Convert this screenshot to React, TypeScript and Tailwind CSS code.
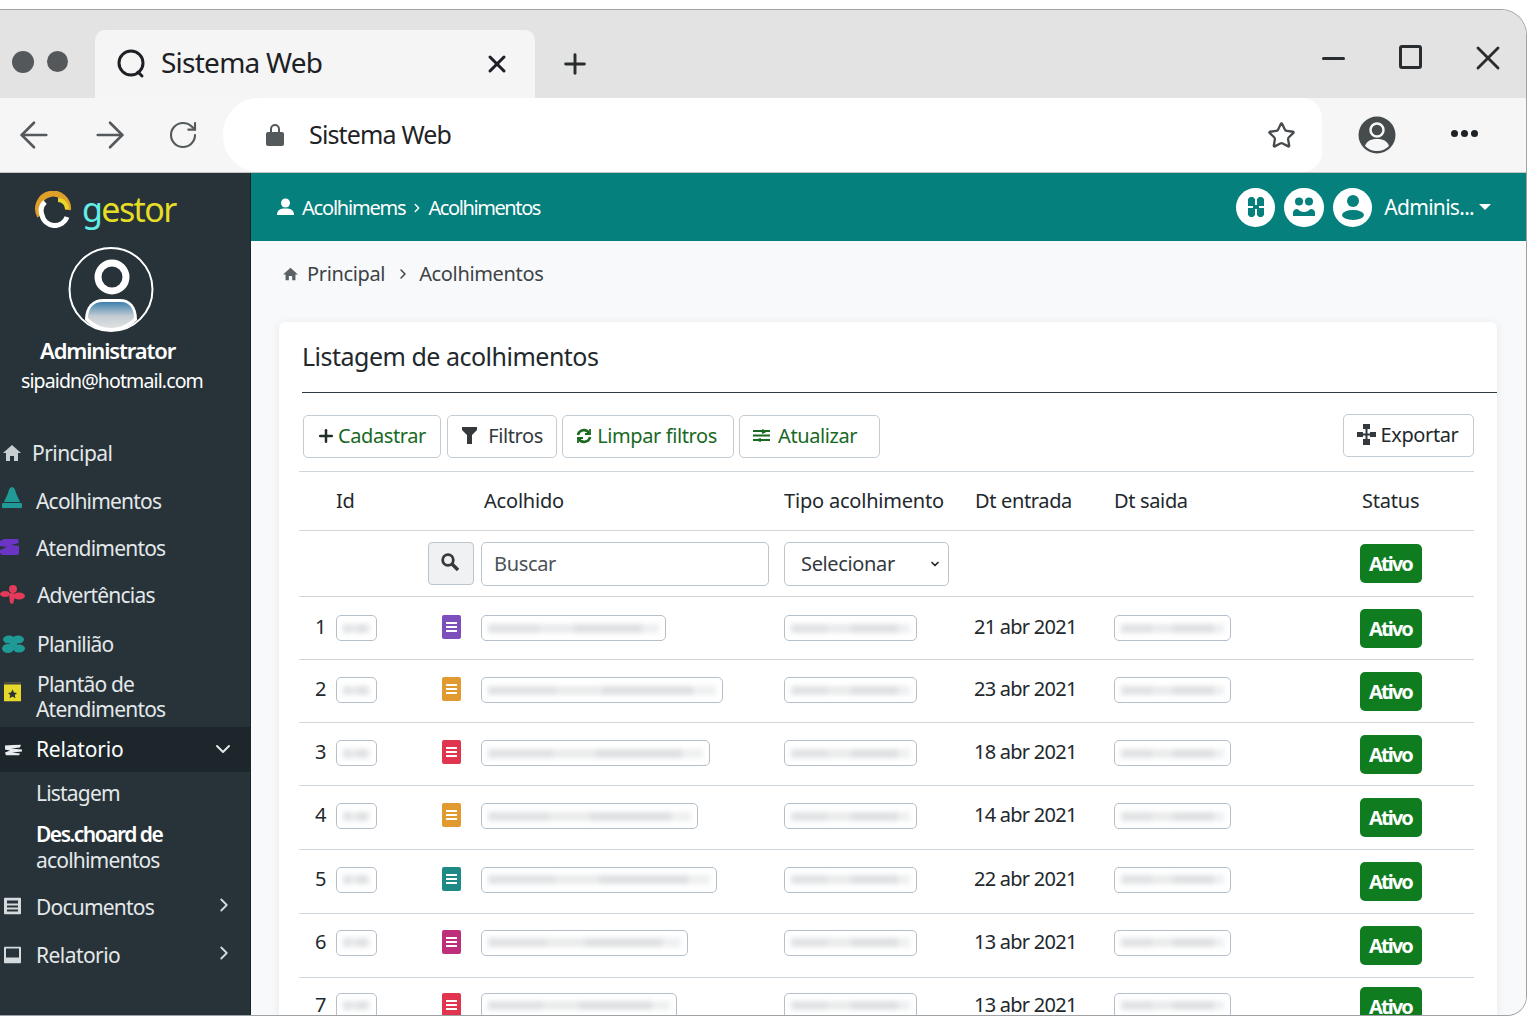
import React from "react";
import { ArrowLeft, ArrowRight, RotateCw, X, Plus, Star, ChevronDown, ChevronRight } from "lucide-react";

const grid = "grid grid-cols-[129px_53px_303px_191px_139px_246px_114px] border-b border-[#cfd6dc]";

function Blur({ width }: { width: string }) {
  return (
    <div className={`${width} h-[26px] rounded-[5px] border border-[#b4bfca] bg-white flex items-center px-[6px] overflow-hidden`}>
      <div className="flex-1 flex h-[9px] blur-[2.5px]">
        <div className="flex-[3] bg-[#e0e2e4]" />
        <div className="flex-[2] bg-[#eaebec]" />
        <div className="flex-[4] bg-[#dee0e2]" />
        <div className="flex-[1] bg-[#eeeff0]" />
      </div>
    </div>
  );
}

function DocIcon({ color }: { color: string }) {
  return (
    <div className={`${color} w-[19px] h-[24px] rounded-[2px] flex flex-col items-center justify-center gap-[2px]`}>
      <div className="w-[11px] h-[2px] bg-white" />
      <div className="w-[11px] h-[2px] bg-white" />
      <div className="w-[11px] h-[2px] bg-white" />
    </div>
  );
}

function Badge() {
  return (
    <div className="w-[62px] h-[39px] rounded-[5px] bg-[#0f7d1f] flex items-center justify-center text-white font-bold text-[20px] tracking-[-1.9px]">
      <span className="-ml-[1px] mt-[1px]">Ativo</span>
    </div>
  );
}

const rows = [
  { n: "1", h: "h-[63px]", o: "mb-0", b: "mb-0", c: "bg-[#7d4fbd]", w: "w-[185px]", d: "21 abr 2021" },
  { n: "2", h: "h-[63px]", o: "mb-[2px]", b: "mb-0", c: "bg-[#e09a30]", w: "w-[242px]", d: "23 abr 2021" },
  { n: "3", h: "h-[63px]", o: "mb-[2px]", b: "mb-0", c: "bg-[#e0344f]", w: "w-[229px]", d: "18 abr 2021" },
  { n: "4", h: "h-[64px]", o: "mb-[3px]", b: "mb-0", c: "bg-[#e09a30]", w: "w-[217px]", d: "14 abr 2021" },
  { n: "5", h: "h-[64px]", o: "mb-[4px]", b: "mb-0", c: "bg-[#1f8a85]", w: "w-[236px]", d: "22 abr 2021" },
  { n: "6", h: "h-[64px]", o: "mb-[6px]", b: "mb-0", c: "bg-[#bd2f78]", w: "w-[207px]", d: "13 abr 2021" },
  { n: "7", h: "h-[64px]", o: "mb-[8px]", b: "mb-[6px]", c: "bg-[#e0344f]", w: "w-[196px]", d: "13 abr 2021" },
];

const txt = "text-[20px] tracking-[-0.75px] whitespace-nowrap";

function NavItem({ h, pl, icon, children, right, cls }: { h: string; pl: string; icon?: React.ReactNode; children: React.ReactNode; right?: React.ReactNode; cls?: string }) {
  return (
    <div className={`${h} ${cls ?? ""} relative flex items-center ${pl} pr-[20px] text-[21px] leading-[26px] tracking-[-0.8px] text-[#e4e8ea]`}>
      {icon && <span className="absolute left-[2px] top-1/2 -translate-y-1/2 flex">{icon}</span>}
      <span className="flex-1">{children}</span>
      {right}
    </div>
  );
}

export default function App() {
  return (
    <div className="w-[1536px] h-[1024px] bg-white pt-[9px] overflow-hidden font-['Noto_Sans','Liberation_Sans',sans-serif]">
      <div className="w-[1527px] h-[1007px] border-t border-r border-b border-[#a0a3a5] rounded-tr-[26px] rounded-br-[20px] overflow-hidden flex flex-col">
        {/* Tab strip */}
        <div className="h-[88px] bg-[#e3e3e3] flex items-end shrink-0">
          <div className="w-[95px] h-[88px] pl-[12px] pt-[41px] flex gap-[13px]">
            <div className="w-[22px] h-[22px] rounded-full bg-[#54585a]" />
            <div className="w-[21px] h-[21px] rounded-full bg-[#54585a]" />
          </div>
          <div className="w-[440px] h-[68px] rounded-t-[10px] bg-[#f5f5f5] flex items-center pl-[21px] pr-[25px]">
            <svg width="32" height="32" viewBox="0 0 32 32" fill="none" stroke="#1d2125" strokeWidth="3" strokeLinecap="round"><circle cx="15" cy="15" r="12" /><path d="M22 24l4 4" /></svg>
            <span className="ml-[13px] mb-[4px] flex-1 text-[28px] tracking-[-0.75px] text-[#1d2125]">Sistema Web</span>
            <X size={28} strokeWidth={2.6} className="text-[#1d2125] ml-[1px] -mr-[1px]" />
          </div>
          <div className="w-[80px] h-[68px] flex items-center justify-center">
            <Plus size={32} strokeWidth={2.2} className="text-[#2a2d30]" />
          </div>
          <div className="flex-1 h-[88px] flex items-center justify-end pr-[18px] pt-[8px]">
            <div className="w-[23px] h-[3px] rounded bg-[#2a2d30]" />
            <div className="ml-[54px] w-[23px] h-[24px] rounded-[3px] border-[3px] border-[#2a2d30] -mt-[2px]" />
            <X size={40} strokeWidth={1.7} className="text-[#2a2d30] ml-[46px]" />
          </div>
        </div>
        {/* Toolbar */}
        <div className="h-[75px] bg-[#f6f6f6] flex items-start shrink-0 border-b border-[#c5c5c5]">
          <div className="w-[223px] h-[74px] pl-[13px] flex items-center gap-[34px] text-[#54595c]">
            <ArrowLeft size={42} strokeWidth={1.5} />
            <ArrowRight size={42} strokeWidth={1.5} />
            <RotateCw size={32} strokeWidth={1.6} className="ml-[2px]" />
          </div>
          <div className="w-[1099px] h-[74px] rounded-l-[36px] rounded-r-[20px] bg-white flex items-center pl-[42px] pr-[26px]">
            <svg width="20" height="26" viewBox="0 0 20 26" fill="#54595c"><path d="M5 11V7a5 5 0 0 1 10 0v4h-2V7a3 3 0 0 0-6 0v4z" /><rect x="1" y="10" width="18" height="14" rx="2" /></svg>
            <span className="ml-[24px] flex-1 text-[25px] tracking-[-0.85px] text-[#1f2326]">Sistema Web</span>
            <Star size={29} strokeWidth={1.9} className="text-[#464b4e]" />
          </div>
          <div className="flex-1 h-[74px] flex items-center pl-[36px]">
            <svg width="38" height="38" viewBox="0 0 38 38"><circle cx="19" cy="19" r="18.5" fill="#464b4e" /><circle cx="19" cy="14" r="6.5" fill="none" stroke="#f6f6f6" strokeWidth="2.5" /><path d="M7 30c2-6 7-7 12-7s10 1 12 7c-3 3-7 5-12 5s-9-2-12-5z" fill="#f6f6f6" /></svg>
            <div className="ml-[55px] flex gap-[3px] -mt-[3px]">
              <div className="w-[7px] h-[7px] rounded-full bg-[#1f2326]" />
              <div className="w-[7px] h-[7px] rounded-full bg-[#1f2326]" />
              <div className="w-[7px] h-[7px] rounded-full bg-[#1f2326]" />
            </div>
          </div>
        </div>
        {/* Body */}
        <div className="flex-1 flex min-h-0">
          {/* Sidebar */}
          <aside className="w-[251px] shrink-0 bg-[#273339] border-r border-[#1c2529] flex flex-col">
            <div className="h-[256px] flex flex-col shrink-0">
              <div className="h-[73px] pl-[34px] flex items-center gap-[9px]">
                <svg width="39" height="37" viewBox="0 0 39 37" fill="none">
                  <path d="M6 25A15 15 0 1 1 34 19" stroke="#dfa02a" strokeWidth="6" />
                  <path d="M33 26A13 13 0 0 1 8 24 12 12 0 0 1 11 11" stroke="#ffffff" strokeWidth="5" />
                  <path d="M24 9a9 9 0 0 1 9 9" stroke="#e8d62a" strokeWidth="4" />
                </svg>
                <span className="mb-[2px] text-[34px] leading-[40px] tracking-[-1.6px] text-[#e6de26]"><span className="text-[#62eee8]">g</span>estor</span>
              </div>
              <div className="pl-[68px]">
                <svg width="86" height="87" viewBox="0 0 86 87" fill="none">
                  <defs><linearGradient id="bd" x1="0" y1="0" x2="0" y2="1"><stop offset="0" stopColor="#3d7fae" /><stop offset="0.55" stopColor="#c5cdd2" /><stop offset="1" stopColor="#dfe1e2" /></linearGradient></defs>
                  <circle cx="43" cy="43.5" r="41.5" stroke="#fff" strokeWidth="2" />
                  <circle cx="44" cy="31" r="14" stroke="#fff" strokeWidth="7" />
                  <path d="M17 74c0-14 8-21 18-21h17c10 0 17 7 17 21-7 7-16 11-26 11s-19-4-26-11z" fill="#fff" />
                  <path d="M20 72c0-10 6-16 14-16h19c8 0 13 6 13 16-6 6-14 10-23 10s-17-4-23-10z" fill="url(#bd)" />
                </svg>
              </div>
              <div className="pl-[40px] pt-[2px] text-[22px] leading-[30px] font-semibold tracking-[-1.15px] text-white">Administrator</div>
              <div className="pl-[21px] pt-[1px] text-[19.5px] leading-[29px] tracking-[-0.88px] text-white">sipaidn@hotmail.com</div>
            </div>
            <NavItem h="h-[48px]" pl="pl-[32px]" icon={<svg width="18" height="18" viewBox="0 0 18 18" fill="#c8cfd2" className="ml-[1px]"><path d="M9 1L0 9h3v8h4v-5h4v5h4V9h3z" /></svg>}><span className="tracking-[-0.55px]">Principal</span></NavItem>
            <NavItem h="h-[48px]" pl="pl-[36px]" icon={<svg width="20" height="22" viewBox="0 0 20 22" fill="#1f9a96" className="-mt-[6px]"><path d="M10 0c2 0 3 2 4 6 1 3 3 6 4 9H2c1-3 3-6 4-9 1-4 2-6 4-6z" /><rect x="0" y="16" width="20" height="5" rx="1" /></svg>}>Acolhimentos</NavItem>
            <NavItem h="h-[46px]" pl="pl-[36px]" icon={<svg width="20" height="17" viewBox="0 0 20 17" fill="#6a35c4" className="-ml-[2px] -mt-[1px]"><path d="M0 2l4-2h14l1 4-8 2 8 1 0 8-2 1H2l-2-2v-3l7-3-7-1z" /></svg>}>Atendimentos</NavItem>
            <NavItem h="h-[47px]" pl="pl-[37px]" icon={<svg width="25" height="20" viewBox="0 0 25 20" fill="#e23a58" className="-ml-[2px]"><circle cx="13" cy="4" r="4" /><ellipse cx="19" cy="11" rx="6" ry="3.5" /><ellipse cx="5" cy="9" rx="5" ry="3" /><path d="M9 9l4-2 2 4-2 8-3-1z" /></svg>}>Advertências</NavItem>
            <NavItem h="h-[51px]" pl="pl-[37px]" icon={<svg width="23" height="19" viewBox="0 0 23 19" fill="#1f9a96"><ellipse cx="7" cy="5" rx="6" ry="4" /><ellipse cx="16" cy="5" rx="6" ry="4" /><ellipse cx="6" cy="14" rx="6" ry="4.500" /><ellipse cx="17" cy="14" rx="6" ry="4" /><rect x="8" y="6" width="7" height="7" /></svg>}>Planilião</NavItem>
            <NavItem h="h-[58px]" pl="pl-[37px]" cls="pb-[3px] !leading-[25px]" icon={<svg width="17" height="19" viewBox="0 0 17 19" className="ml-[2px] -mt-[12px]"><rect width="17" height="19" fill="#e6d92a" /><rect y="0" width="17" height="2" fill="#444" /><path d="M8.5 7l1.500 3 3 .5-2.200 2 .6 3.200-2.900-1.600-2.900 1.600.6-3.200-2.200-2 3-.5z" fill="#283238" /></svg>}>Plantão de<br /><span className="-ml-px">Atendimentos</span></NavItem>
            <NavItem h="h-[45px]" pl="pl-[36px]" cls="bg-[#1c262b] !text-white pb-[2px]" icon={<svg width="17" height="11" viewBox="0 0 17 11" fill="#e8ecee" className="ml-[3px]"><path d="M0 1l16-1-1 3-9 1 11 1v2L7 8l8 1-1 2H1l-1-3 5-2-5-1z" /></svg>} right={<ChevronDown size={24} strokeWidth={2} className="text-[#e4e8ea] -mr-[5px]" />}><span className="tracking-[-0.2px]">Relatorio</span></NavItem>
            <NavItem h="h-[42px]" pl="pl-[36px]">Listagem</NavItem>
            <NavItem h="h-[66px]" pl="pl-[36px]"><span className="font-semibold text-white tracking-[-1.5px]">Des.choard de</span><br />acolhimentos</NavItem>
            <NavItem h="h-[51px]" pl="pl-[36px]" cls="pt-[2px]" icon={<svg width="17" height="17" viewBox="0 0 17 17" className="ml-[2px]"><rect width="17" height="17" rx="1" fill="#d5dadc" /><rect x="3" y="3" width="11" height="3" fill="#273339" /><rect x="3" y="8" width="11" height="2" fill="#273339" /><rect x="3" y="12" width="11" height="2" fill="#273339" /></svg>} right={<ChevronRight size={22} strokeWidth={2} className="text-[#d5dadc] -mr-[5px] -mt-[4px]" />}>Documentos</NavItem>
            <NavItem h="h-[48px]" pl="pl-[36px]" icon={<svg width="17" height="17" viewBox="0 0 17 17" className="ml-[2px]"><rect width="17" height="17" rx="1" fill="#d5dadc" /><rect x="2" y="2" width="13" height="9" fill="#273339" /></svg>} right={<ChevronRight size={22} strokeWidth={2} className="text-[#d5dadc] -mr-[5px] -mt-[4px]" />}><span className="tracking-[-0.55px]">Relatorio</span></NavItem>
          </aside>
          {/* Main */}
          <main className="flex-1 min-w-0 bg-[#f8f9fa] flex flex-col">
            <div className="h-[68px] shrink-0 bg-[#05807c] flex items-center pl-[26px] pr-[35px] text-white">
              <svg width="17" height="18" viewBox="0 0 17 18" fill="#fff"><circle cx="8.500" cy="5" r="4.500" /><path d="M0 17c0-5 3-6.500 8.500-6.500S17 12 17 17z" /></svg>
              <span className="ml-[8px] mt-[2px] text-[20px] tracking-[-1.2px]">Acolhimems</span>
              <ChevronRight size={14} strokeWidth={2.4} className="ml-[5px] mt-[2px]" />
              <span className="ml-[4px] mt-[2px] flex-1 text-[20px] tracking-[-1.4px]">Acolhimentos</span>
              <div className="flex gap-[9px]">
                <div className="w-[39px] h-[39px] rounded-full bg-white flex items-center justify-center">
                  <svg width="18" height="20" viewBox="0 0 18 20" fill="#05807c"><path d="M1 2l2-2h3l2 2v7H1zM10 2l2-2h3l2 2v7h-7zM1 11h7v7l-2 2H3l-2-2zM10 11h7v7l-2 2h-3l-2-2z" /><rect x="6" y="8" width="6" height="4" /></svg>
                </div>
                <div className="w-[40px] h-[39px] rounded-full bg-white flex items-center justify-center">
                  <svg width="24" height="20" viewBox="0 0 24 20" fill="#05807c"><circle cx="7" cy="4.500" r="4" /><circle cx="17" cy="4.500" r="4" /><path d="M1 19v-3c0-3 2-4 4-4 2 0 2 3 7 3s5-3 7-3c2 0 4 1 4 4v3z" /></svg>
                </div>
                <div className="w-[39px] h-[39px] rounded-full bg-white flex items-center justify-center">
                  <svg width="22" height="26" viewBox="0 0 22 26" fill="#05807c"><circle cx="11" cy="7" r="6" /><ellipse cx="11" cy="21" rx="11" ry="5" /></svg>
                </div>
              </div>
              <span className="ml-[12px] mt-[1px] text-[21px] tracking-[-0.7px]">Adminis...</span>
              <span className="ml-[5px] w-0 h-0 border-x-[6px] border-x-transparent border-t-[6px] border-t-white" />
            </div>
            <div className="h-[81px] shrink-0 flex items-center pl-[32px] pb-[15px] text-[#3d4347] text-[20px] tracking-[-0.35px]">
              <svg width="15" height="14" viewBox="0 0 18 17" fill="#5a6165"><path d="M9 1L0 9h3v7h4v-5h4v5h4V9h3z" /></svg>
              <span className="ml-[9px]">Principal</span>
              <ChevronRight size={16} strokeWidth={2.2} className="ml-[10px]" />
              <span className="ml-[8px]">Acolhimentos</span>
            </div>
            <section className="ml-[28px] w-[1218px] flex-1 min-h-0 rounded-t-[6px] bg-white shadow-[0_1px_8px_rgba(0,0,0,0.08)] pl-[20px] pr-[23px] overflow-hidden">
              <div className="h-[71px] -mr-[23px] ml-[3px] border-b border-[#2e3a3f] flex items-center text-[25px] tracking-[-0.5px] text-[#22282c]">Listagem de acolhimentos</div>
              <div className="h-[79px] border-b border-[#cfd6dc] flex items-start pt-[22px] pl-[4px] gap-[5px] text-[20px] leading-[26px] tracking-[-0.4px]">
                <button className="w-[138px] h-[43px] pb-[2px] rounded-[5px] border border-[#c3ccd3] flex items-center justify-center gap-[2px] pr-[2px] text-[#18691f] mr-[1px]"><Plus size={20} strokeWidth={3} className="text-[#1f2f25]" />Cadastrar</button>
                <button className="w-[110px] h-[43px] pb-[2px] rounded-[5px] border border-[#c3ccd3] flex items-center justify-center gap-[10px] text-[#33393d]">
                  <svg width="17" height="17" viewBox="0 0 17 17" fill="#33393d"><path d="M1 0h15v3l-5 5v9H6V8L1 3z" /></svg>Filtros</button>
                <button className="w-[172px] h-[43px] pb-[2px] rounded-[5px] border border-[#c3ccd3] flex items-center justify-center gap-[5px] pr-[3px] text-[#18691f]">
                  <svg width="16" height="16" viewBox="0 0 16 16" fill="none" stroke="#18691f" strokeWidth="2.600"><path d="M2 7a6 6 0 0 1 11-2M14 9a6 6 0 0 1-11 2" /><path d="M14 1v5H9M2 15v-5h5" strokeWidth="1.800" /></svg>Limpar filtros</button>
                <button className="w-[141px] h-[43px] pb-[2px] rounded-[5px] border border-[#c3ccd3] flex items-center pl-[13px] gap-[8px] text-[#18691f]">
                  <svg width="17" height="13" viewBox="0 0 17 13" fill="none" stroke="#18691f" strokeWidth="2"><path d="M0 2h17M0 6.500h17M0 11h17" /><path d="M9 1l3 1.500-3 1.500M8 10l-3 1 3 1" /></svg>Atualizar</button>
                <button className="ml-auto w-[131px] h-[43px] pb-[2px] -mt-px rounded-[5px] border border-[#c3ccd3] flex items-center justify-center gap-[5px] pr-[2px] text-[#22282c]">
                  <svg width="19" height="21" viewBox="0 0 19 21" fill="#33393d"><rect x="6" y="0" width="7" height="5" /><rect x="0" y="8" width="6" height="5" /><rect x="13" y="8" width="6" height="5" /><rect x="6" y="15" width="7" height="6" /><rect x="8.500" y="5" width="2" height="10" /><rect x="6" y="9.500" width="7" height="2" /></svg>Exportar</button>
              </div>
              <div className={`${grid} h-[59px] items-center text-[20px] tracking-[-0.2px] text-[#22282c]`}>
                <div className="pl-[37px]">Id</div>
                <div />
                <div className="pl-[3px]">Acolhido</div>
                <div className="whitespace-nowrap">Tipo acolhimento</div>
                <div className="whitespace-nowrap tracking-[-0.35px]">Dt entrada</div>
                <div className="tracking-[-0.35px]">Dt saida</div>
                <div className="pl-[2px]">Status</div>
              </div>
              <div className={`${grid} h-[66px] items-center`}>
                <div />
                <div>
                  <div className="w-[46px] h-[43px] rounded-[4px] border border-[#bcc5cc] bg-[#eff1f2] flex items-center justify-center -mt-[1px]">
                    <svg width="18" height="18" viewBox="0 0 18 18" fill="none" stroke="#33393d" className="-ml-[2px] -mt-[2px]"><circle cx="7" cy="7" r="5.300" strokeWidth="2.800" /><path d="M11 11l6 6" strokeWidth="3.400" /></svg>
                  </div>
                </div>
                <div>
                  <input placeholder="Buscar" className="w-[288px] h-[44px] block rounded-[5px] border border-[#bcc5cc] bg-white pl-[12px] text-[20px] tracking-[-0.35px] placeholder:text-[#4b5256]" />
                </div>
                <div className="relative w-[165px]">
                  <select defaultValue="Selecionar" className="appearance-none w-[165px] h-[44px] block rounded-[5px] border border-[#bcc5cc] bg-white pl-[16px] text-[20px] tracking-[-0.35px] text-[#33393d]">
                    <option>Selecionar</option>
                  </select>
                  <ChevronDown size={12} strokeWidth={3.5} className="absolute right-[8px] top-[16px] text-[#22282c]" />
                </div>
                <div />
                <div />
                <div className="-mt-[1px]"><Badge /></div>
              </div>
              {rows.map((r) => (
                <div key={r.n} className={`${grid} ${r.h} items-center`}>
                  <div className={`${r.o} pl-[17px] flex items-center gap-[9px] text-[#22282c]`}>
                    <span className={`${txt} w-[11px] -mt-[2px] -ml-[1px] mr-[1px]`}>{r.n}</span>
                    <Blur width="w-[41px]" />
                  </div>
                  <div className={`${r.o} pl-[14px]`}><div className="-mt-[2px]"><DocIcon color={r.c} /></div></div>
                  <div className={r.o}><Blur width={r.w} /></div>
                  <div className={r.o}><Blur width="w-[133px]" /></div>
                  <div className={`${r.o} ${txt} text-[#22282c] -ml-[1px]`}><div className="-mt-[2px]">{r.d}</div></div>
                  <div className={r.o}><Blur width="w-[117px]" /></div>
                  <div className={r.b}><Badge /></div>
                </div>
              ))}
            </section>
          </main>
        </div>
      </div>
    </div>
  );
}
